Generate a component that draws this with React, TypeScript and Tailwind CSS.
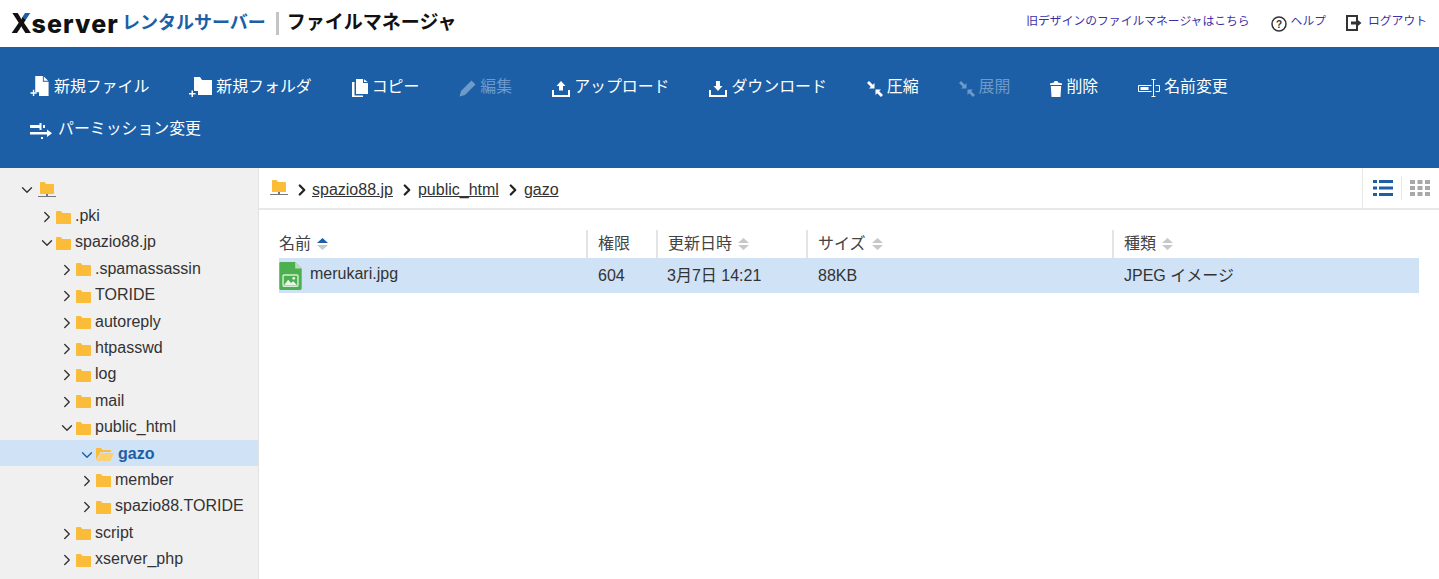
import type { ReactNode } from "react";
import { ChevronDown, ChevronRight } from "lucide-react";

const Folder = () => (
  <svg width="15" height="13" viewBox="0 0 15 13" className="shrink-0">
    <path d="M0 1.2C0 .5.5 0 1.2 0h3.6l1.6 2H14c.6 0 1 .4 1 1v9c0 .6-.4 1-1 1H1c-.6 0-1-.4-1-1z" fill="#fbbc3a" />
  </svg>
);

const OpenFolder = () => (
  <svg width="18" height="13" viewBox="0 0 18 13" className="shrink-0">
    <path d="M0 1c0-.6.4-1 1-1h4l1.500 2H14c.6 0 1 .4 1 1v1H4.500L0 12z" fill="#fbbc3a" />
    <path d="M4.800 5H18l-3.600 8H.8z" fill="#fcd06f" />
  </svg>
);

const RootFolder = ({ lineColor = "#777" }: { lineColor?: string }) => (
  <svg width="18" height="16" viewBox="0 0 18 16" className="shrink-0">
    <path d="M2 1c0-.6.4-1 1-1h3.500L8 2h7c.6 0 1 .4 1 1v8c0 .6-.4 1-1 1H3c-.6 0-1-.4-1-1z" fill="#fbbc3a" />
    <path d="M0 14.500h18" stroke={lineColor} strokeWidth="1" />
    <rect x="8" y="12" width="2" height="3" fill={lineColor} />
  </svg>
);

const iconNewFile = (
  <svg width="20" height="21" viewBox="0 0 20 22" fill="white">
    <path d="M5 0h8v6h6v15H9v-4H5z" />
    <path d="M14 .5 18.500 5H14z" />
    <path d="M2.500 14.500h1.500v2.500h2.500v1.500H4V21H2.500v-2.500H0V17h2.500z" />
  </svg>
);
const iconNewFolder = (
  <svg width="23" height="20" viewBox="0 0 23 20" fill="white">
    <path d="M5 0h6l2 3h10v15H9v-4H5z" />
    <path d="M2.500 13.500H4V16h2.500v1.500H4V20H2.500v-2.500H0V16h2.500z" />
  </svg>
);
const iconCopy = (
  <svg width="16" height="18" viewBox="0 0 16 18" fill="white">
    <path d="M4 0h7v4h5v11H4z" />
    <path d="M12 .3 15.700 3H12z" />
    <path d="M0 3h2.500v13.500H11V18H0z" />
  </svg>
);
const iconEdit = (
  <svg width="17" height="17" viewBox="0 0 17 17" fill="#6d9ac9">
    <path d="M12.500.5 16.500 4.500 6 15 .5 16.500 2 11z" />
  </svg>
);
const iconUpload = (
  <svg width="18" height="16" viewBox="0 0 18 16" fill="white">
    <path d="M9 0l4.500 5H11v4.500H7V5H4.500z" />
    <path d="M0 9h2v5h14V9h2v7H0z" />
  </svg>
);
const iconDownload = (
  <svg width="18" height="16" viewBox="0 0 18 16" fill="white">
    <path d="M7 0h4v5h2.500L9 10 4.500 5H7z" />
    <path d="M0 9h2v5h14V9h2v7H0z" />
  </svg>
);
const Compress = ({ color }: { color: string }) => (
  <svg width="16" height="16" viewBox="0 0 16 16" fill={color}>
    <path d="M0 2 2 0l3.800 3.800L7.500 2v5.500H2l1.800-1.700z" />
    <path d="M16 14l-2 2-3.800-3.800L8.500 14V8.500H14l-1.800 1.700z" />
  </svg>
);
const iconDelete = (
  <svg width="12" height="16" viewBox="0 0 12 16" fill="white">
    <path d="M4.500 0h3l.5 1.500 4 1V4H0V2.500l4-1z" />
    <path d="M.8 5h10.400L10.500 16h-9z" />
  </svg>
);
const iconRename = (
  <svg width="22" height="18" viewBox="0 0 22 18" fill="none" stroke="white">
    <path d="M13.500 6.500H.5v6h13" />
    <rect x="2.500" y="8" width="8" height="3" fill="white" stroke="none" />
    <path d="M13.500.5h4M13.500 17.500h4M15.500 .5v17M17.500 6.500h4v6h-4" />
  </svg>
);
const iconPermission = (
  <svg width="22" height="16" viewBox="0 0 22 16" fill="white">
    <path d="M0 2h9.500V0h2v7h-2V5H0zM13 2h2v3h-2z" />
    <path d="M0 9h17V6.500l5 3.800-5 3.700V11.500H0z" />
    <rect x="11" y="14" width="2" height="2" />
  </svg>
);

const tools: { label: string; icon: ReactNode; off?: boolean; gap?: string }[] = [
  { label: "新規ファイル", icon: iconNewFile },
  { label: "新規フォルダ", icon: iconNewFolder },
  { label: "コピー", icon: iconCopy },
  { label: "編集", icon: iconEdit, off: true },
  { label: "アップロード", icon: iconUpload },
  { label: "ダウンロード", icon: iconDownload },
  { label: "圧縮", icon: <Compress color="white" /> },
  { label: "展開", icon: <Compress color="#6d9ac9" />, off: true },
  { label: "削除", icon: iconDelete },
  { label: "名前変更", icon: iconRename },
  { label: "パーミッション変更", icon: iconPermission, gap: "gap-[6px]" },
];

const tree: { name: string; level: number; open?: boolean; current?: boolean }[] = [
  { name: ".pki", level: 1 },
  { name: "spazio88.jp", level: 1, open: true },
  { name: ".spamassassin", level: 2 },
  { name: "TORIDE", level: 2 },
  { name: "autoreply", level: 2 },
  { name: "htpasswd", level: 2 },
  { name: "log", level: 2 },
  { name: "mail", level: 2 },
  { name: "public_html", level: 2, open: true },
  { name: "gazo", level: 3, open: true, current: true },
  { name: "member", level: 3 },
  { name: "spazio88.TORIDE", level: 3 },
  { name: "script", level: 2 },
  { name: "xserver_php", level: 2 },
];

const levelPadding: Record<number, string> = { 1: "pl-[40px]", 2: "pl-[60px]", 3: "pl-[80px]" };

const SortArrows = ({ active }: { active?: boolean }) => (
  <svg width="11" height="12" viewBox="0 0 11 12" className="ml-[6px]">
    <path d="M5.500 0 11 5H0z" fill={active ? "#1c5fa6" : "#c8c8c8"} />
    <path d="M5.500 12 11 7H0z" fill="#c8c8c8" />
  </svg>
);

const columns = [
  { label: "名前", width: "w-[307px]", active: true, first: true },
  { label: "権限", width: "w-[70px]", noSort: true },
  { label: "更新日時", width: "w-[150px]" },
  { label: "サイズ", width: "w-[306px]" },
  { label: "種類", width: "flex-1" },
];

const Crumb = ({ className }: { className: string }) => (
  <ChevronRight size={18} strokeWidth={3} className={`shrink-0 text-[#222] ${className}`} />
);

export default function App() {
  return (
    <div className="h-[579px] w-[1439px] overflow-hidden bg-white text-[#333] font-['Liberation_Sans','Noto_Sans_CJK_JP',sans-serif]">
      {/* Header */}
      <header className="flex h-[47px] items-center justify-between pl-[11px] pr-[12px]">
        <div className="flex items-center">
          <span className="flex w-[108px] items-baseline font-['Inter',sans-serif] text-[25px] leading-none font-extrabold text-[#111]">
            <span className="bg-[linear-gradient(45deg,#111_66%,#1c5fa6_66%)] bg-clip-text text-[27px] text-transparent">X</span>
            <span className="tracking-[1.100px]">server</span>
          </span>
          <span className="ml-[3px] text-[18px] font-bold text-[#1c5fa6]">レンタルサーバー</span>
          <span className="ml-[10px] mr-[8px] h-[23px] w-[3px] bg-[#c4c4c4]" />
          <span className="text-[19px] font-bold text-[#111]">ファイルマネージャ</span>
        </div>
        <div className="-mt-[3px] flex items-center text-[11.800px] text-[#3d2fa8]">
          <span>旧デザインのファイルマネージャはこちら</span>
          <svg width="16" height="16" viewBox="0 0 16 16" className="ml-[21px] mt-[3px]">
            <circle cx="8" cy="8" r="7" fill="none" stroke="#333" strokeWidth="1.500" />
            <text x="8" y="11.500" textAnchor="middle" fontSize="10" fontWeight="700" fill="#333">?</text>
          </svg>
          <span className="ml-[4px]">ヘルプ</span>
          <svg width="16" height="16" viewBox="0 0 16 16" className="ml-[20px] mt-[2px]" fill="#333">
            <path d="M0 0h12v5h-2V2H2v12h8v-3h2v5H0z" />
            <path d="M5 6.500h5V3.500L15.500 8 10 12.500v-3H5z" />
          </svg>
          <span className="ml-[6px]">ログアウト</span>
        </div>
      </header>

      {/* Toolbar */}
      <div className="flex h-[121px] flex-wrap content-start gap-x-[40px] gap-y-[16px] bg-[#1c5fa6] pt-[28px] pl-[30px] pr-[30px]">
        {tools.map((tool) => (
          <div
            key={tool.label}
            className={`flex h-[26px] items-center text-[15.900px] ${tool.gap ?? "gap-[4px]"} ${tool.off ? "text-[#6d9ac9]" : "text-white"}`}
          >
            <span className="mb-[4px] flex h-[22px] items-end">{tool.icon}</span>
            <span className="-mt-[3px]">{tool.label}</span>
          </div>
        ))}
      </div>

      <div className="flex h-[411px]">
        {/* Folder tree */}
        <aside className="w-[259px] shrink-0 border-r border-[#e2e2e2] bg-[#f0f0f0] pt-[8px] text-[16px]">
          <div className="flex h-[26.400px] items-center pl-[20px] pt-[2px]">
            <ChevronDown size={18} strokeWidth={1.800} className="-mx-[2.500px] mr-[2.500px] shrink-0" />
            <RootFolder />
          </div>
          {tree.map((row) => (
            <div
              key={row.name}
              className={`flex h-[26.400px] items-center pt-[3px] ${levelPadding[row.level]} ${row.current ? "bg-[#d0e2f6] font-bold text-[#1c5fa6]" : ""}`}
            >
              {row.open ? (
                <ChevronDown size={18} strokeWidth={1.800} className="-ml-[2.500px] mr-[0.500px] shrink-0" />
              ) : (
                <ChevronRight size={18} strokeWidth={1.800} className="-ml-[2.500px] mr-[0.500px] shrink-0" />
              )}
              {row.current ? <OpenFolder /> : <Folder />}
              <span className={`${row.current ? "ml-[4px]" : "ml-[4px]"} -mt-[2px]`}>{row.name}</span>
            </div>
          ))}
        </aside>

        {/* File list */}
        <main className="min-w-0 flex-1">
          <div className="flex h-[42px] items-center border-b-2 border-[#e8e8e8] pl-[11px]">
            <RootFolder />
            <div className="flex flex-1 items-center pt-[3px] text-[16px]">
              <Crumb className="ml-[5px] mr-[1px]" />
              <span className="underline">spazio88.jp</span>
              <Crumb className="ml-[5px] mr-[2px]" />
              <span className="underline">public_html</span>
              <Crumb className="ml-[5px] mr-[2px]" />
              <span className="underline">gazo</span>
            </div>
            <div className="flex h-[40px] w-[77px] items-center border-l border-[#e8e8e8] pl-[10px]">
              <svg width="20" height="18" viewBox="0 0 20 18" fill="#1c5fa6">
                <path d="M0 1h4v3H0zM6 1h14v3H6zM0 7.500h4v3H0zM6 7.500h14v3H6zM0 14h4v3H0zM6 14h14v3H6z" />
              </svg>
              <span className="mx-[8px] h-[24px] w-px bg-[#e8e8e8]" />
              <svg width="20" height="18" viewBox="0 0 20 18" fill="#a8a8a8">
                <path d="M0 1h5v4H0zM7.500 1h5v4h-5zM15 1h5v4h-5zM0 7h5v4H0zM7.500 7h5v4h-5zM15 7h5v4h-5zM0 13h5v4H0zM7.500 13h5v4h-5zM15 13h5v4h-5z" />
              </svg>
            </div>
          </div>

          <div className="mx-[20px] mt-[20px]">
            <div className="flex h-[28px] text-[16px] text-[#444]">
              {columns.map((col) => (
                <div
                  key={col.label}
                  className={`flex items-center ${col.width} ${col.first ? "" : "border-l-2 border-[#e4e4e4] pl-[10px]"}`}
                >
                  {col.label}
                  {!col.noSort && <SortArrows active={col.active} />}
                </div>
              ))}
            </div>
            <div className="flex h-[35px] items-center bg-[#d0e2f6] text-[16px]">
              <div className="flex w-[307px] items-center">
                <svg width="23" height="28" viewBox="0 0 24 30">
                  <path d="M0 1.500C0 .7.700 0 1.500 0H17l7 7v21.500c0 .8-.7 1.500-1.500 1.500h-21C.7 30 0 29.300 0 28.500z" fill="#4caf50" />
                  <path d="M17 0l7 7h-7z" fill="#b7e0b9" />
                  <rect x="4" y="14" width="16" height="12" rx="1" fill="none" stroke="#d4f0d5" strokeWidth="1.500" />
                  <path d="M5 25l4.500-6 3 3.500 2.500-2 4 4.500z" fill="#e8f7e9" />
                  <circle cx="15.500" cy="17.500" r="1.500" fill="#e8f7e9" />
                </svg>
                <span className="ml-[8px] -mt-[4px]">merukari.jpg</span>
              </div>
              <div className="w-[70px] pl-[12px]">604</div>
              <div className="w-[150px] pl-[11px]">3月7日 14:21</div>
              <div className="w-[306px] pl-[12px]">88KB</div>
              <div className="flex-1 pl-[12px]">JPEG イメージ</div>
            </div>
          </div>
        </main>
      </div>
    </div>
  );
}
